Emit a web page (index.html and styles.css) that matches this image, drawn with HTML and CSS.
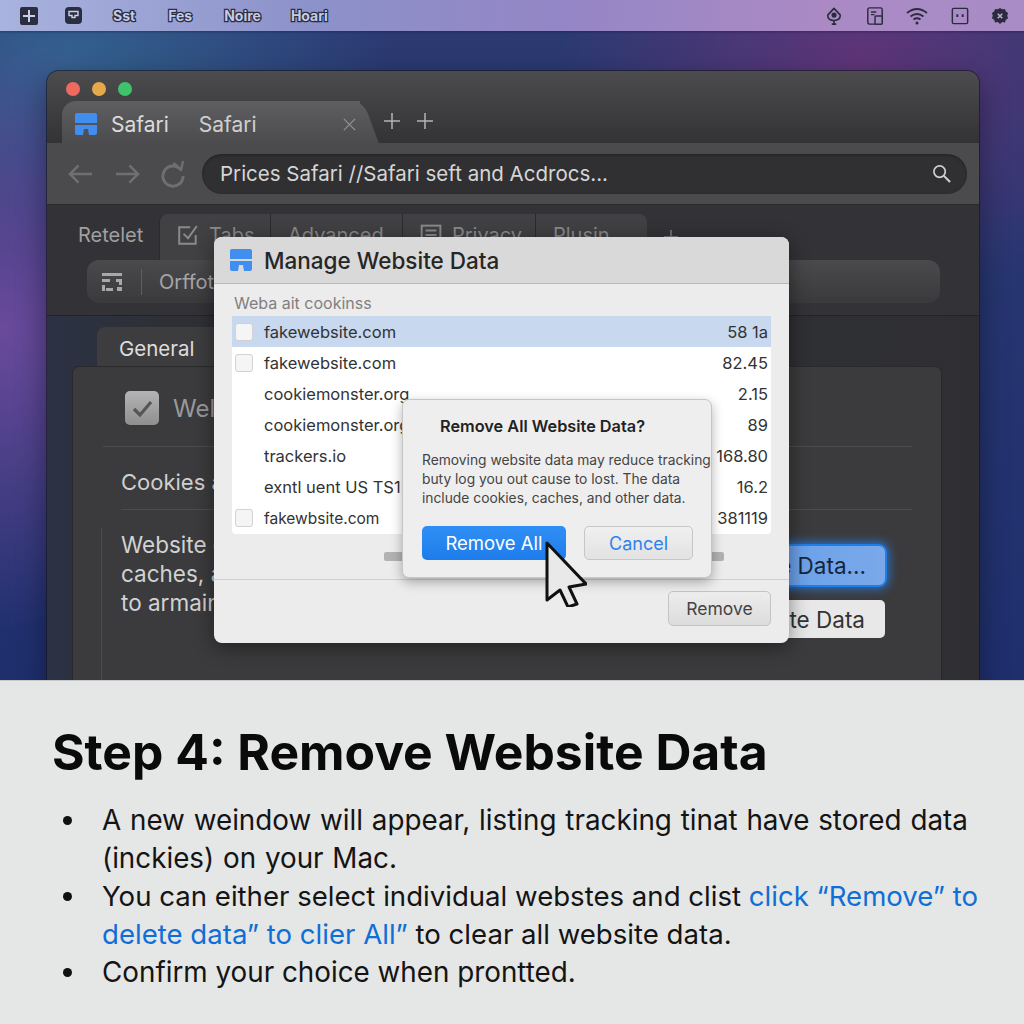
FILE: index.html
```html
<!DOCTYPE html>
<html lang="en">
<head>
  <meta charset="UTF-8">
  <title>Step 4: Remove Website Data</title>
  <link rel="stylesheet" href="styles.css">
</head>
<body>
  <main class="page">
    <section class="desktop">
      <header class="menubar">
        <div class="menu-left">
          <svg class="mi mi-apple" viewBox="0 0 18 18"><rect width="18" height="18" rx="2" fill="#2b2d40"/><path d="M9 3v12M3 9h12" stroke="#c9d0ea" stroke-width="2"/></svg>
          <svg class="mi mi-finder" viewBox="0 0 17 17"><rect width="17" height="17" rx="4" fill="#2b2d40"/><path d="M4 4.500h9v4h-3v2H7v-2H4z" fill="none" stroke="#c9d0ea" stroke-width="1.400"/></svg>
          <span class="menu-word w1">Sst</span>
          <span class="menu-word w2">Fes</span>
          <span class="menu-word w3">Noire</span>
          <span class="menu-word w4">Hoari</span>
        </div>
        <div class="menu-right">
          <svg class="st" viewBox="0 0 20 20" fill="none" stroke="#2b2b40" stroke-width="1.800"><path d="M10 1.500 17 9Q17 15 10 15 3 15 3 9z" stroke-linejoin="round"/><circle cx="10" cy="9" r="2" fill="#2b2b40"/><path d="M10 15v3M7.500 19h5"/></svg>
          <svg class="st" viewBox="0 0 20 20" fill="none" stroke="#2b2b40" stroke-width="1.600"><rect x="2" y="1" width="16" height="18" rx="2"/><path d="M5.500 5.500h6M5.500 8.500h4"/><rect x="10" y="10" width="8" height="9" rx="1" fill="#a88ac4"/></svg>
          <svg class="st wide" viewBox="0 0 22 18" fill="none" stroke="#2b2b40" stroke-width="1.800"><path d="M1 6q10-8 20 0M4.500 9.500q6.500-5 13 0M7.500 12.500q3.500-2.500 7 0"/><circle cx="11" cy="16" r="1.500" fill="#2b2b40" stroke="none"/></svg>
          <svg class="st" viewBox="0 0 20 20" fill="none" stroke="#2b2b40" stroke-width="1.600"><rect x="1.500" y="1.500" width="17" height="17" rx="1.500"/><path d="M7 8v3M13 8v3" stroke-width="2.200"/></svg>
          <svg class="st" viewBox="0 0 20 20"><path d="M10 1l2.500 1.600 3-.3 1 2.800 2.500 1.700-1 2.900 1 2.900-2.500 1.700-1 2.800-3-.3L10 19l-2.500-2.200-3 .3-1-2.800L1 12.600l1-2.900-1-2.900 2.500-1.700 1-2.800 3 .3z" fill="#2b2b40"/><path d="M7.500 7.500l5 5M12.500 7.500l-5 5" stroke="#c9a4d0" stroke-width="1.800"/></svg>
        </div>
      </header>

      <div class="window">
        <div class="titlebar">
          <div class="lights">
            <span class="light red"></span>
            <span class="light amber"></span>
            <span class="light green"></span>
          </div>
          <div class="tabstrip">
            <div class="tab">
              <svg class="safari-icon" viewBox="0 0 22 22"><path d="M2 0h18a2 2 0 0 1 2 2v8H0V2a2 2 0 0 1 2-2z" fill="#3f8ef0"/><path d="M0 12h22v8a2 2 0 0 1-2 2h-6l-1-6H9l-1 6H2a2 2 0 0 1-2-2z" fill="#3f8ef0"/></svg>
              <span class="tab-title">Safari</span>
              <span class="tab-title second">Safari</span>
              <svg class="tab-close" viewBox="0 0 16 16" stroke="#8e8e90" stroke-width="1.500"><path d="M2 2l12 12M14 2 2 14"/></svg>
            </div>
            <svg class="plus" viewBox="0 0 18 18" stroke="#b4b4b6" stroke-width="1.500"><path d="M9 1v16M1 9h16"/></svg>
            <svg class="plus" viewBox="0 0 18 18" stroke="#b4b4b6" stroke-width="1.500"><path d="M9 1v16M1 9h16"/></svg>
          </div>
        </div>

        <div class="toolbar">
          <svg class="nav" viewBox="0 0 26 22" fill="none" stroke="#6f6f72" stroke-width="2.600"><path d="M25 11H2M11 2l-9 9 9 9"/></svg>
          <svg class="nav" viewBox="0 0 26 22" fill="none" stroke="#6f6f72" stroke-width="2.600"><path d="M1 11h23M15 2l9 9-9 9"/></svg>
          <svg class="nav reload" viewBox="0 0 26 28" fill="none" stroke="#6f6f72" stroke-width="3"><path d="M22 10a10.500 10.500 0 1 0 2 6"/><path d="M14 2.500l8 7 2-9" stroke-width="2.400"/></svg>
          <div class="urlbar">
            <span class="url">Prices Safari //Safari seft and Acdrocs...</span>
            <svg class="search" viewBox="0 0 20 20" fill="none" stroke="#cfcfd0" stroke-width="1.800"><circle cx="8" cy="8" r="6"/><path d="M12.500 12.500 19 19" stroke-width="2.200"/></svg>
          </div>
        </div>

        <div class="prefs-head">
          <div class="prefs-tabs">
            <span class="prefs-label">Retelet</span>
            <div class="ptab first">
              <svg class="ptab-icon" viewBox="0 0 20 20" fill="none" stroke="#8a8a8c" stroke-width="1.800"><path d="M17 10v8H2V3h10"/><path d="M6 9l4 4 8-11"/></svg>
              Tabs
            </div>
            <div class="ptab second">Advanced</div>
            <div class="ptab third">
              <svg class="ptab-icon" viewBox="0 0 20 20" fill="none" stroke="#8a8a8c" stroke-width="1.800"><rect x="1.500" y="1.500" width="17" height="17"/><path d="M5 6h10M5 10h10"/></svg>
              Privacy
            </div>
            <div class="ptab fourth">Plusin</div>
            <svg class="ptab-plus" viewBox="0 0 18 18" stroke="#77777a" stroke-width="2"><path d="M9 1v16M1 9h16"/></svg>
          </div>
          <div class="filter">
            <svg class="filter-icon" viewBox="0 0 20 18" fill="#a8a8aa"><path d="M0 0h20v3H0zM0 6h8v3H0zM0 12h3v6H0zM4 15h7v3H4zM14 6h6v6h-3V9h-3zM15 14h5v4h-5z"/></svg>
            <span class="filter-sep"></span>
            <span class="filter-text">Orffot</span>
          </div>
        </div>

        <div class="prefs-body">
          <div class="general-tab">General</div>
          <div class="panel">
            <div class="check-row">
              <span class="big-check"><svg viewBox="0 0 24 24" fill="none" stroke="#555" stroke-width="3.200"><path d="M4 13l6 6L21 6"/></svg></span>
              <span class="check-text">Welcome</span>
            </div>
            <div class="panel-line"></div>
            <div class="cookies">Cookies and website data</div>
            <div class="panel-line inset"></div>
            <div class="website">
              <p class="website-text">Website data includes<br>caches, and cookies<br>to armain</p>
              <div class="website-btns">
                <button class="glow-btn">Manage Website Data...</button>
                <button class="plain-btn">Remove All Website Data</button>
              </div>
            </div>
          </div>
        </div>
      </div>

      <div class="dialog">
        <div class="dialog-head">
          <svg class="safari-icon" viewBox="0 0 22 22"><path d="M2 0h18a2 2 0 0 1 2 2v8H0V2a2 2 0 0 1 2-2z" fill="#3f8ef0"/><path d="M0 12h22v8a2 2 0 0 1-2 2h-6l-1-6H9l-1 6H2a2 2 0 0 1-2-2z" fill="#3f8ef0"/></svg>
          <h2 class="dialog-title">Manage Website Data</h2>
        </div>
        <div class="dialog-body">
          <div class="list-label">Weba ait cookinss</div>
          <div class="sites">
            <div class="site selected"><span class="box"></span><span class="domain">fakewebsite.com</span><span class="size">58 1a</span></div>
            <div class="site"><span class="box"></span><span class="domain">fakewebsite.com</span><span class="size">82.45</span></div>
            <div class="site"><span class="domain">cookiemonster.org</span><span class="size">2.15</span></div>
            <div class="site"><span class="domain">cookiemonster.org</span><span class="size">89</span></div>
            <div class="site"><span class="domain">trackers.io</span><span class="size">168.80</span></div>
            <div class="site"><span class="domain">exntl uent US TS1581</span><span class="size">16.2</span></div>
            <div class="site"><span class="box"></span><span class="domain small">fakewbsite.com</span><span class="size">381119</span></div>
          </div>
          <div class="scroller"></div>
        </div>
        <div class="dialog-foot">
          <button class="remove-btn">Remove</button>
        </div>

        <div class="alert">
          <h3 class="alert-title">Remove All Website Data?</h3>
          <p class="alert-text">Removing website data may reduce tracking<br>buty log you out cause to lost. The data<br>include cookies, caches, and other data.</p>
          <div class="alert-btns">
            <button class="btn-primary">Remove All</button>
            <button class="btn-cancel">Cancel</button>
          </div>
        </div>
      </div>

      <svg class="cursor" viewBox="0 0 42 66"><path d="M2 2v57l13-10 8 17 9-3-8-17 17-3z" fill="#e9e9e9" stroke="#111" stroke-width="3" stroke-linejoin="round"/></svg>
    </section>

    <section class="caption">
      <h1>Step 4: Remove Website Data</h1>
      <ul>
        <li class="wide-words">A new weindow will appear, listing tracking tinat have stored data (inckies) on your Mac.</li>
        <li class="tight">You can either select individual webstes and clist <span class="hl">click “Remove” to delete data” to clier All”</span> to clear all website data.</li>
        <li>Confirm your choice when prontted.</li>
      </ul>
    </section>
  </main>
</body>
</html>
```

FILE: styles.css
```css
* { box-sizing: border-box; }

html, body {
  margin: 0;
  height: 100%;
  overflow: hidden;
}

body {
  font-family: Inter, "Liberation Sans", sans-serif;
}

button {
  font-family: inherit;
  cursor: default;
}

.page {
  display: flex;
  flex-direction: column;
  width: 1024px;
  height: 1024px;
}

/* Desktop */

.desktop {
  position: relative;
  height: 680px;
  flex: none;
  overflow: hidden;
  background:
    radial-gradient(ellipse 300px 240px at 860px 60px, #5f3579 0%, rgba(95,53,121,0) 100%),
    radial-gradient(ellipse 260px 300px at 0 330px, #6a4a9c 0%, rgba(106,74,156,0) 100%),
    radial-gradient(ellipse 320px 200px at 70px 60px, #33618f 0%, rgba(51,97,143,0) 100%),
    linear-gradient(#2c3a72, #1f2f6e);
}

.menubar {
  display: flex;
  justify-content: space-between;
  align-items: center;
  height: 31px;
  background: linear-gradient(90deg, #a9b3de 0%, #8c92ca 30%, #9486c6 55%, #ab8ac4 80%, #a88cc6 100%);
  box-shadow: 0 1px 2px rgba(20, 20, 50, .4);
}

.menu-left,
.menu-right {
  display: flex;
  align-items: center;
}

.menu-left { padding-left: 20px; }
.menu-right { padding-right: 15px; gap: 22.500px; }

.mi-apple { width: 18px; height: 18px; }
.mi-finder { width: 17px; height: 17px; margin-left: 27px; }

.menu-word {
  font-size: 14px;
  font-weight: 700;
  color: #c4cbe6;
  -webkit-text-stroke: 2.500px #2b2d40;
  paint-order: stroke fill;
}

.w1 { margin-left: 31px; }
.w2 { margin-left: 33px; }
.w3 { margin-left: 32px; }
.w4 { margin-left: 30px; }

.st { width: 18px; height: 20px; }
.st.wide { width: 22px; }

/* Browser window */

.window {
  position: absolute;
  left: 47px;
  top: 71px;
  width: 932px;
  height: 640px;
  border-radius: 12px 12px 0 0;
  background: #333336;
  box-shadow: 0 0 0 1px rgba(20, 20, 30, .6), 0 10px 30px rgba(0, 0, 0, .4);
  overflow: hidden;
}

.titlebar {
  height: 72px;
  padding: 11px 0 0 15px;
  background: linear-gradient(#4c4c4e, #333335);
  display: flex;
  flex-direction: column;
}

.lights {
  display: flex;
  gap: 12px;
  padding-left: 4px;
}

.light {
  width: 14px;
  height: 14px;
  border-radius: 50%;
}

.red { background: #ee6a5f; }
.amber { background: #e6a94a; }
.green { background: #3fc26c; }

.tabstrip {
  display: flex;
  align-items: center;
  margin-top: 5px;
  height: 42px;
}

.tab {
  position: relative;
  display: flex;
  align-items: center;
  width: 298px;
  height: 42px;
  padding: 4px 3px 0 13px;
  border-radius: 14px 0 0 0;
  background: linear-gradient(#5e5e60, #4c4c4e);
}

/* slanted right edge of the tab */
.tab::after {
  content: "";
  position: absolute;
  top: 0;
  right: -11px;
  width: 26px;
  height: 100%;
  border-radius: 0 12px 0 0;
  background: linear-gradient(#5e5e60, #4c4c4e);
  transform: skewX(20deg);
}

.safari-icon {
  width: 22px;
  height: 22px;
  flex: none;
}

.tab-title {
  margin-left: 14px;
  font-size: 21px;
  color: #dcdcdc;
}

.tab-title.second {
  margin-left: 30px;
  color: #cfcfcf;
}

.tab-close {
  position: relative;
  z-index: 1;
  width: 15px;
  height: 15px;
  margin-left: auto;
}

.plus {
  width: 18px;
  height: 18px;
  margin-left: 15px;
  margin-top: -2px;
}

.tab + .plus { margin-left: 23px; }

.toolbar {
  display: flex;
  align-items: center;
  height: 62px;
  padding: 0 12px 0 21px;
  background: #4b4b4d;
  border-bottom: 1px solid #2b2b2d;
}

.nav {
  width: 25px;
  height: 22px;
  margin-right: 22px;
  flex: none;
}

.nav.reload {
  height: 28px;
  margin: 0 17px 0 -2px;
}

.urlbar {
  flex: 1;
  display: flex;
  justify-content: space-between;
  align-items: center;
  height: 40px;
  padding: 0 16px 0 18px;
  border-radius: 20px;
  background: #303032;
  box-shadow: inset 0 1px 3px rgba(0, 0, 0, .35);
}

.url {
  font-size: 20.500px;
  color: #d6d6d6;
}

.search {
  width: 19px;
  height: 19px;
}

/* Preferences behind the dialog */

.prefs-head {
  height: 111px;
  padding-top: 9px;
  background: #333337;
  border-bottom: 1px solid #232326;
}

.prefs-tabs {
  display: flex;
  align-items: center;
  height: 46px;
  padding-left: 31px;
}

.prefs-label {
  width: 81px;
  padding-bottom: 4px;
  font-size: 20px;
  color: #a0a0a2;
}

.ptab {
  display: flex;
  align-items: center;
  gap: 10px;
  height: 46px;
  padding: 0 0 4px 17px;
  font-size: 20px;
  color: #8a8a8c;
  background: #414143;
  border-left: 1px solid #2b2b2d;
}

.ptab.first { width: 111px; border-radius: 8px 0 0 0; }
.ptab.second { width: 132px; }
.ptab.third { width: 133px; }
.ptab.fourth { width: 112px; border-radius: 0 8px 0 0; }

.ptab-icon {
  width: 22px;
  height: 22px;
  flex: none;
}

.ptab-plus {
  width: 16px;
  height: 16px;
  margin-left: 16px;
}

.filter {
  display: flex;
  align-items: center;
  width: 853px;
  height: 43px;
  margin: 0 0 0 40px;
  padding-left: 15px;
  border-radius: 12px;
  background: linear-gradient(#4a4a4c, #3a3a3c);
}

.filter-icon {
  width: 20px;
  height: 18px;
}

.filter-sep {
  width: 1px;
  height: 26px;
  margin: 0 17px 0 19px;
  background: #5e5e60;
}

.filter-text {
  font-size: 20px;
  color: #a6a6a8;
}

.prefs-body {
  height: 400px;
  padding: 11px 0 0 26px;
  background: linear-gradient(90deg, #2b3244 0%, #2e3036 12%, #2f2f33 100%);
}

.general-tab {
  width: 130px;
  height: 40px;
  margin-left: 24px;
  padding: 9px 0 0 22px;
  border-radius: 8px 8px 0 0;
  font-size: 20.500px;
  color: #dddddd;
  background: #3d3d3f;
}

.panel {
  width: 868px;
  height: 320px;
  padding: 24px 29px 0 30px;
  border-radius: 6px 6px 0 0;
  background: #3b3b3d;
  box-shadow: 0 0 0 1px #2a2a2c;
}

.check-row {
  display: flex;
  align-items: center;
  gap: 14px;
  padding-left: 22px;
  height: 34px;
}

.big-check {
  display: flex;
  align-items: center;
  justify-content: center;
  width: 34px;
  height: 34px;
  border-radius: 5px;
  background: linear-gradient(#b4b4b4, #8f8f8f);
}

.big-check svg {
  width: 24px;
  height: 24px;
}

.check-text {
  font-size: 24px;
  color: #99999b;
}

.panel-line {
  height: 1px;
  margin-top: 21px;
  background: #4c4c4e;
}

.panel-line.inset {
  margin: 13px 0 0 18px;
}

.cookies {
  margin: 22px 0 0 18px;
  font-size: 22px;
  line-height: 27px;
  color: #cfcfcf;
}

.website {
  display: flex;
  justify-content: space-between;
  margin-top: 18px;
  height: 170px;
  border-left: 1px solid #4c4c4e;
  margin-left: -2px;
}

.website-text {
  margin: 2px 0 0 19px;
  font-size: 22.500px;
  line-height: 29px;
  color: #d2d2d2;
}

.website-btns {
  display: flex;
  flex-direction: column;
  align-items: flex-end;
  gap: 13px;
  margin: 16px 25px 0 0;
}

.glow-btn {
  height: 43px;
  padding: 0 19px;
  border: 2px solid #1f7fe8;
  border-radius: 8px;
  font-size: 22.500px;
  color: #15263c;
  background: linear-gradient(90deg, #4a90e8, #7ba9ea);
  box-shadow: 0 0 10px 2px rgba(40, 130, 240, .75);
}

.plain-btn {
  height: 38px;
  margin-right: 2px;
  padding: 0 20px;
  border: 0;
  border-radius: 5px;
  font-size: 22.500px;
  color: #333;
  background: #e8e8e8;
}

/* Manage website data dialog */

.dialog {
  position: absolute;
  left: 214px;
  top: 237px;
  display: flex;
  flex-direction: column;
  width: 575px;
  height: 406px;
  border-radius: 8px;
  background: #ececec;
  box-shadow: 0 4px 20px rgba(0, 0, 0, .45);
}

.dialog-head {
  display: flex;
  align-items: center;
  gap: 12px;
  height: 47px;
  flex: none;
  padding-left: 16px;
  border-radius: 8px 8px 0 0;
  border-bottom: 1px solid #b8b8b8;
  background: #d9d9d9;
}

.dialog-title {
  margin: 0;
  font-size: 22.500px;
  font-weight: 500;
  color: #262626;
}

.dialog-body {
  flex: 1;
  padding: 8px 18px 0;
  border-bottom: 1px solid #cfcfcf;
}

.list-label {
  height: 22px;
  padding-left: 2px;
  font-size: 16px;
  line-height: 22px;
  color: #808080;
}

.sites {
  display: grid;
  grid-auto-rows: 31.100px;
  margin-top: 2px;
  border-radius: 0 0 4px 4px;
  background: #fff;
  overflow: hidden;
}

.site {
  display: flex;
  align-items: center;
  padding: 0 3px 0 32px;
  position: relative;
  font-size: 16.500px;
  color: #333;
}

.site.selected { background: #c8d8ee; }

.box {
  position: absolute;
  left: 3px;
  width: 18px;
  height: 18px;
  border: 1px solid #d2d2d2;
  border-radius: 3px;
  background: #f5f5f5;
}

.domain { flex: 1; white-space: nowrap; }
.domain.small { font-size: 15.500px; }

.scroller {
  width: 340px;
  height: 9px;
  margin: 18px 0 0 152px;
  border-radius: 2px;
  background: #b2b2b2;
}

.dialog-foot {
  display: flex;
  justify-content: flex-end;
  height: 63px;
  flex: none;
  padding: 11px 18px 0 0;
}

.remove-btn {
  width: 103px;
  height: 35px;
  border: 1px solid #c4c4c4;
  border-radius: 5px;
  font-size: 17.500px;
  color: #444;
  background: linear-gradient(#ededed, #dcdcdc);
}

/* Confirmation over the dialog */

.alert {
  position: absolute;
  left: 188px;
  top: 162px;
  width: 310px;
  height: 179px;
  padding: 16px 0 0 19px;
  border: 1px solid #c6c6c6;
  border-radius: 7px;
  background: #eeeeee;
  box-shadow: 0 4px 12px rgba(0, 0, 0, .3);
}

.alert-title {
  margin: 0 0 0 18px;
  font-size: 16.300px;
  line-height: 20px;
  font-weight: 600;
  color: #222;
}

.alert-text {
  margin: 15px 0 0;
  font-size: 13.800px;
  line-height: 19px;
  white-space: nowrap;
  color: #444;
}

.alert-btns {
  display: flex;
  gap: 18px;
  margin-top: 18px;
}

.btn-primary {
  width: 144px;
  height: 34px;
  border: 0;
  border-radius: 5px;
  font-size: 18.500px;
  color: #fff;
  background: linear-gradient(#2f8ff5, #1f7ceb);
}

.btn-cancel {
  width: 109px;
  height: 34px;
  border: 1px solid #c6c6c6;
  border-radius: 5px;
  font-size: 18px;
  color: #2a84ee;
  background: linear-gradient(#f0f0f0, #e2e2e2);
}

.cursor {
  position: absolute;
  left: 545px;
  top: 541px;
  width: 42px;
  height: 66px;
}

/* Caption */

.caption {
  flex: 1;
  padding: 43px 30px 0 52px;
  background: #e5e6e6;
  border-top: 1px solid #c9c9c9;
}

.caption h1 {
  margin: 0;
  font-size: 49.800px;
  line-height: 56px;
  font-weight: 700;
  color: #0a0a0a;
}

.caption ul {
  margin: 21px 0 0;
  padding: 0 0 0 50px;
  list-style: none;
}

.caption li {
  position: relative;
  font-size: 27.800px;
  line-height: 38px;
  color: #141414;
}

.caption li::before {
  content: "";
  position: absolute;
  left: -39px;
  top: 15px;
  width: 9px;
  height: 9px;
  border-radius: 50%;
  background: #111;
}

.wide-words { word-spacing: 1px; }
.caption li.tight { font-size: 27.600px; }

.hl { color: #0f6fd6; }
```
